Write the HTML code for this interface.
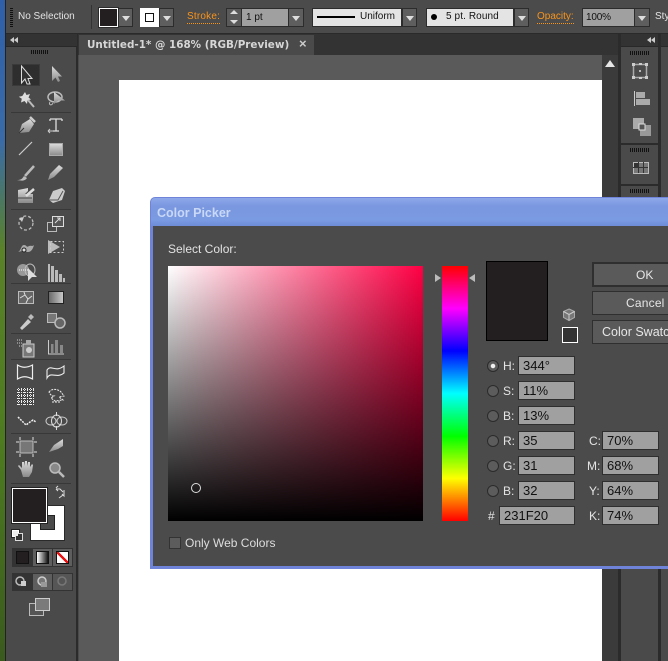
<!DOCTYPE html>
<html><head><meta charset="utf-8"><title>Color Picker</title>
<style>
html,body{margin:0;padding:0;background:#4a4a4a}
#p{position:relative;width:668px;height:661px;overflow:hidden;background:#4a4a4a;font-family:"Liberation Sans",sans-serif;font-size:12px;color:#e2e2e2}
#p div{position:absolute;box-sizing:border-box}
.t{white-space:nowrap;line-height:14px}
.dd{background:#5e5e5e;border:1px solid #2c2c2c}
.dd:after{content:"";position:absolute;left:3px;top:7px;border:4px solid transparent;border-top:5px solid #ddd;border-bottom:0}
.f{background:#a0a0a0;border:1px solid #2e2e2e;color:#111;line-height:17px;padding-left:4px;font-size:13px;height:19px}
.l{color:#e4e4e4;font-size:12px;line-height:19px;white-space:nowrap}
.r{width:12px;height:12px;border-radius:50%;background:#5c5c5c;border:1px solid #2b2b2b;left:487px}
.b{background:#5a5a5a;border:1px solid #2f2f2f;left:592px;width:90px;color:#e6e6e6;font-size:12px;line-height:22px}
.sep{height:1px;background:#383838;left:11px;width:60px}
.grip{height:4px;background:repeating-linear-gradient(90deg,#111 0 1px,transparent 1px 2px)}
</style></head><body><div id="p">
<!-- desktop edge -->
<div style="left:0;top:0;width:5px;height:661px;background:linear-gradient(180deg,#2f5fa8 0,#3a6ba8 140px,#5a8228 250px,#4d7a20 450px,#3a5a1e 661px)"></div>
<div style="left:5px;top:0;width:1px;height:661px;background:#222"></div>
<!-- top bar -->
<div style="left:6px;top:0;width:662px;height:34px;background:#4b4b4b;border-bottom:1px solid #2a2a2a"></div>
<div style="left:10px;top:8px;width:3px;height:19px;background:repeating-linear-gradient(180deg,#111 0 1px,transparent 1px 2px)"></div>
<div class="t" style="left:18px;top:10px;font-size:10px">No Selection</div>
<div style="left:91px;top:5px;width:1px;height:24px;background:#333"></div>
<div style="left:99px;top:8px;width:19px;height:19px;background:#231f20;border:1px solid #fff;outline:1px solid #2c2c2c"></div>
<div class="dd" style="left:118px;top:8px;width:15px;height:19px"></div>
<div style="left:140px;top:8px;width:19px;height:19px;background:#fff"><div style="left:5px;top:5px;width:9px;height:9px;border:1px solid #111"></div></div>
<div class="dd" style="left:159px;top:8px;width:15px;height:19px"></div>
<div class="t" style="left:187px;top:10px;font-size:10px;color:#f7941d;border-bottom:1px dotted #f7941d;line-height:13px;letter-spacing:.2px">Stroke:</div>
<div style="left:226px;top:8px;width:16px;height:19px;background:#5a5a5a;border:1px solid #2c2c2c"></div>
<div style="left:230px;top:10px;border:4px solid transparent;border-bottom:4px solid #ddd;border-top:0"></div>
<div style="left:230px;top:20px;border:4px solid transparent;border-top:4px solid #ddd;border-bottom:0"></div>
<div class="t" style="left:242px;top:8px;width:47px;height:19px;background:#a0a0a0;color:#111;padding:2px 4px;font-size:10px;border-top:1px solid #2c2c2c;border-bottom:1px solid #2c2c2c">1 pt</div>
<div class="dd" style="left:288px;top:8px;width:16px;height:19px"></div>
<div style="left:312px;top:8px;width:90px;height:19px;background:#e4e4e4;border:1px solid #2c2c2c"></div>
<div style="left:317px;top:16px;width:38px;height:2px;background:#000"></div>
<div class="t" style="left:360px;top:10px;color:#111;font-size:10px">Uniform</div>
<div class="dd" style="left:402px;top:8px;width:15px;height:19px"></div>
<div style="left:426px;top:8px;width:88px;height:19px;background:#e4e4e4;border:1px solid #2c2c2c"></div>
<div style="left:431px;top:14px;width:6px;height:6px;border-radius:50%;background:#000"></div>
<div class="t" style="left:446px;top:10px;color:#111;font-size:10px;letter-spacing:.1px">5 pt. Round</div>
<div class="dd" style="left:514px;top:8px;width:15px;height:19px"></div>
<div class="t" style="left:537px;top:10px;font-size:10px;color:#f7941d;border-bottom:1px dotted #f7941d;line-height:13px">Opacity:</div>
<div class="t" style="left:582px;top:8px;width:53px;height:19px;background:#a0a0a0;color:#111;padding:2px 3px;font-size:10px;letter-spacing:-.2px;border:1px solid #2c2c2c">100%</div>
<div class="dd" style="left:634px;top:8px;width:16px;height:19px"></div>
<div class="t" style="left:655px;top:10px;font-size:10px">Sty</div>
<!-- doc area -->
<div style="left:78px;top:34px;width:543px;height:21px;background:#333"></div>
<div style="left:79px;top:35px;width:235px;height:20px;background:#4a4a4a"></div>
<div class="t" style="left:87px;top:38px;font-size:10.400px;font-weight:bold;color:#d6d6d6;font-family:'DejaVu Sans',sans-serif">Untitled-1* @ 168% (RGB/Preview)</div>
<div class="t" style="left:299px;top:37px;font-size:13px;font-weight:bold;color:#ccc">×</div>
<div style="left:79px;top:55px;width:524px;height:606px;background:#5a5a5a"></div>
<div style="left:119px;top:80px;width:483px;height:581px;background:#fff"></div>
<div style="left:602px;top:55px;width:16px;height:606px;background:#3b3b3b"></div>
<div style="left:618px;top:34px;width:3px;height:627px;background:#2b2b2b"></div>
<div style="left:605px;top:60px;border:5px solid transparent;border-bottom:7px solid #e6e6e6;border-top:0"></div>
<!-- left panel -->
<div style="left:6px;top:34px;width:72px;height:627px;background:#4a4a4a;border-right:2px solid #2b2b2b"></div>
<div style="left:6px;top:34px;width:71px;height:13px;background:#333;border-bottom:1px solid #282828"></div>
<div style="left:10px;top:37px;font-size:0;border:3px solid transparent;border-right:4px solid #ccc;border-left:0"></div>
<div style="left:14px;top:37px;font-size:0;border:3px solid transparent;border-right:4px solid #ccc;border-left:0"></div>
<div class="grip" style="left:31px;top:50px;width:18px"></div>
<div style="left:12px;top:64px;width:28px;height:22px;background:#2e2e2e;border:1px solid #3a3a3a"></div>
<div class="sep" style="top:112px"></div><div class="sep" style="top:209px"></div><div class="sep" style="top:283px"></div><div class="sep" style="top:333px"></div><div class="sep" style="top:359px"></div><div class="sep" style="top:433px"></div><div class="sep" style="top:483px"></div>
<svg style="position:absolute;left:0;top:0" width="80" height="661" viewBox="0 0 80 661">
<defs><linearGradient id="g" x1="0" y1="0" x2="0" y2="1"><stop offset="0" stop-color="#ddd"/><stop offset="1" stop-color="#8a8a8a"/></linearGradient>
<linearGradient id="h" x1="0" y1="0" x2="1" y2="0"><stop offset="0" stop-color="#666"/><stop offset="1" stop-color="#ccc"/></linearGradient></defs>
<path d="M21.500 66V83L25 79L27 84H30L28 78.500H32Z" fill="#333" stroke="#ddd"/>
<path d="M52 66V81L55.500 77.500L58 82L60 81L58 76.500H62Z" fill="url(#g)"/>
<path d="M25 92l1.500 3 3.500-1-1.500 3.500 2.500 2-3.500.7L27 104l-2.500-3-3.500 1.500.8-3.700-3-2 3.500-.8Z" fill="#ddd"/><path d="M28 100l6 7" stroke="#bbb" stroke-width="2"/>
<ellipse cx="55" cy="97" rx="7" ry="5" fill="none" stroke="#bbb" stroke-width="1.500"/><path d="M54 92V104L58 100.500H65Z" fill="url(#g)"/><path d="M50 102c-2 3 2 4 3 1" fill="none" stroke="#bbb"/>
<path d="M19 133l3-9 8-5 4 5-5 8Z" fill="url(#g)"/><path d="M19 133l5-5" stroke="#333"/><path d="M30 117l5 5" stroke="#ccc" stroke-width="2.500"/>
<path d="M50 119H62M56 119V131M53 131H59M50 119v2M62 119v2" fill="none" stroke="#ddd" stroke-width="1.300"/><path d="M48 131H53M48 131l2-2M48 131l2 2" stroke="#ccc" fill="none"/>
<path d="M19 155L32 142" stroke="#ccc" stroke-width="1.200"/>
<rect x="49.500" y="143.500" width="13" height="12" fill="url(#g)" stroke="#aaa"/>
<path d="M17 180c4 0 5-1 7-4l3 2c-2 3-5 3-10 2Z" fill="#bbb"/><path d="M25 176L34 166" stroke="#bbb" stroke-width="2.500"/>
<path d="M48 180l2-6 9-9 4 3-9 9Z" fill="url(#g)"/>
<path d="M18 190l10-2v3l-3 3h8v9H18Z" fill="url(#g)"/><path d="M26 196l8-7" stroke="#ddd" stroke-width="2.500"/><path d="M18 198h14" stroke="#444"/>
<path d="M49 200l4-9 9-3 3 3-3 9-9 3Z" fill="#ccc"/><path d="M49 200h9l5-9" stroke="#555" fill="none"/>
<circle cx="26" cy="223" r="7" fill="none" stroke="#bbb" stroke-width="1.300" stroke-dasharray="3 2"/><path d="M19 218l3 4 2-5Z" fill="#ccc"/>
<rect x="47.500" y="222.500" width="9" height="9" fill="none" stroke="#bbb"/><rect x="52.500" y="216.500" width="11" height="10" fill="#555" stroke="#ddd"/><path d="M55 223l5-5M57 218h3v3" stroke="#ddd" fill="none"/>
<path d="M18 252c3-1 3-7 6-7s2 3 5 1c2-1 3 1 5-1-1 4-3 7-6 7s-4-3-6-1Z" fill="#aaa"/><circle cx="24" cy="250" r="2" fill="#ddd" stroke="#222"/>
<path d="M48 240l12 7-12 7Z" fill="#bbb"/><rect x="50.500" y="241.500" width="13" height="11" fill="none" stroke="#ccc" stroke-dasharray="2 2"/>
<ellipse cx="23" cy="270" rx="6" ry="6" fill="#999"/><ellipse cx="30" cy="270" rx="5" ry="6" fill="none" stroke="#bbb"/><path d="M28 268V281L32 277H37Z" fill="#ddd"/><path d="M19 270h9" stroke="#fff" stroke-dasharray="1 1"/>
<path d="M48 264h2v18h-2ZM51 266h3v16h-3ZM55 270h3v12h-3ZM59 274h3v8h-3ZM63 278h2v4h-2Z" fill="#bbb"/>
<rect x="18.500" y="291.500" width="15" height="12" fill="#666" stroke="#bbb"/><path d="M20 298l5-3 3 4 4-3M25 295l-1-3M28 299l-2 4" stroke="#ddd" fill="none"/>
<rect x="48.500" y="291.500" width="15" height="12" fill="url(#h)" stroke="#222"/>
<path d="M20 328l8-9 3 3-9 8Z" fill="#ccc"/><path d="M28 317l3-3 3 3-3 3Z" fill="#bbb"/>
<rect x="47.500" y="313.500" width="9" height="9" fill="#777" stroke="#bbb"/><circle cx="60" cy="323" r="5" fill="#666" stroke="#bbb" stroke-width="1.500"/>
<rect x="23" y="344" width="11" height="13" fill="#777" stroke="#ccc"/><circle cx="29" cy="350" r="3" fill="#ccc"/><rect x="26" y="340" width="5" height="4" fill="#aaa"/><path d="M17 340h5M17 343h5M19 346h3" stroke="#ccc" stroke-dasharray="1 1"/>
<path d="M48.500 340v14H64" stroke="#ccc" fill="none"/><rect x="51" y="344" width="2.500" height="9" fill="#888"/><rect x="55" y="340" width="3" height="13" fill="#888"/><rect x="60" y="345" width="3" height="8" fill="#888"/>
<path d="M17.500 365c5 3 9 3 15 0v14c-6-3-10-3-15 0Z" fill="none" stroke="#eee" stroke-width="1.200"/>
<path d="M47 370c4-6 8 3 17-4v7c-7 6-13-2-17 5Z" fill="none" stroke="#eee" stroke-width="1.100"/>
<rect x="17" y="388" width="17" height="17" fill="#444"/><path d="M17 389.500h18M17 392.500h18M17 395.500h18M17 398.500h18M17 401.500h18M17 404.500h18M18.500 388v18M21.500 388v18M24.500 388v18M27.500 388v18M30.500 388v18M33.500 388v18" stroke="#eee" stroke-dasharray="1 1"/>
<path d="M49 392c3-4 9-3 12 0l3 4-5 1 4 3-8 1-4-3 3-2c-3 0-4-2-5-4ZM52 402h8" fill="none" stroke="#eee" stroke-dasharray="2 1"/>
<path d="M18 417l5 5 3 3 4-3 3-2 3 2" fill="none" stroke="#eee" stroke-width="1.500" stroke-dasharray="2 1"/>
<ellipse cx="51" cy="421" rx="5" ry="4" fill="none" stroke="#ccc"/><ellipse cx="62" cy="421" rx="5" ry="4" fill="none" stroke="#ccc"/><ellipse cx="56.500" cy="421" rx="5" ry="6" fill="none" stroke="#ddd"/><path d="M56.500 412v4M56.500 426v4" stroke="#ddd"/>
<rect x="20" y="441" width="13" height="12" fill="#777" stroke="#bbb"/><path d="M16 442h3M34 442h3M16 452h3M34 452h3M20 437v3M33 437v3M20 454v3M33 454v3" stroke="#ddd"/>
<path d="M49 452l5-7 9-6v7l-5 3Z" fill="url(#g)"/>
<path d="M21 470l-3-4 1-1 3 3v-6h2v4l1-5h2v5l1-4h2v5l2-3 1 1-1 7-3 5h-6Z" fill="url(#g)"/>
<circle cx="55" cy="468" r="5" fill="#888" stroke="#bbb" stroke-width="1.500"/><path d="M59 472l5 5" stroke="#bbb" stroke-width="2.500"/>
<path d="M56 489h4l3 3M59 498l4-3M56 488l2-2M56 489l2 2M64 490v6l-2-2" stroke="#ddd" fill="none"/>
<rect x="11.500" y="529.500" width="8" height="8" fill="#fff" stroke="#222"/><rect x="15.500" y="533.500" width="7" height="7" fill="#333" stroke="#ddd"/>
<path d="M13 531h5v5h-5Z" fill="#eee"/>
<rect x="29.500" y="603.500" width="14" height="12" fill="#555" stroke="#bbb"/><rect x="35.500" y="598.500" width="14" height="12" fill="#7a7a7a" stroke="#ccc"/>
</svg>
<div style="left:30px;top:505px;width:35px;height:36px;background:#fff;border:1px solid #2a2a2a"><div style="left:9px;top:9px;width:15px;height:15px;background:#4a4a4a;border:1px solid #222"></div></div>
<div style="left:12px;top:488px;width:35px;height:35px;background:#231f20;border:1px solid #fff;outline:1px solid #222"></div>
<div style="left:12px;top:548px;width:61px;height:19px;background:#333"></div>
<div style="left:33px;top:549px;width:19px;height:17px;background:#5e5e5e"></div>
<div style="left:53px;top:549px;width:19px;height:17px;background:#5e5e5e"></div>
<div style="left:16px;top:551px;width:13px;height:13px;background:#231f20;border:1px solid #111"></div>
<div style="left:36px;top:551px;width:13px;height:13px;background:linear-gradient(90deg,#fff,#111);border:1px solid #111"></div>
<div style="left:56px;top:551px;width:13px;height:13px;background:linear-gradient(135deg,#fff 0 42%,#e11 42% 58%,#fff 58%);border:1px solid #111;transform:scaleX(-1)"></div>
<div style="left:12px;top:573px;width:61px;height:18px;background:#333"></div>
<div style="left:33px;top:574px;width:19px;height:16px;background:#5e5e5e"></div>
<div style="left:53px;top:574px;width:19px;height:16px;background:#565656"></div>
<svg style="position:absolute;left:12px;top:573px" width="61" height="18"><circle cx="8" cy="8" r="4" fill="none" stroke="#bbb" stroke-width="1.500"/><rect x="9" y="8" width="5" height="5" fill="#ccc"/><circle cx="30" cy="8" r="4" fill="#777" stroke="#ccc" stroke-width="1.500"/><rect x="29" y="9" width="6" height="5" fill="#999"/><circle cx="50" cy="8" r="4" fill="#555" stroke="#777" stroke-width="1.500"/></svg>
<!-- right panel -->
<div style="left:621px;top:34px;width:47px;height:13px;background:#333;border-bottom:1px solid #282828"></div>
<div style="left:647px;top:37px;border:3px solid transparent;border-right:4px solid #ccc;border-left:0"></div>
<div style="left:651px;top:37px;border:3px solid transparent;border-right:4px solid #ccc;border-left:0"></div>
<div style="left:621px;top:47px;width:37px;height:614px;background:#4a4a4a"></div>
<div style="left:658px;top:34px;width:3px;height:627px;background:#2b2b2b"></div>
<div style="left:621px;top:143px;width:37px;height:2px;background:#2b2b2b"></div>
<div style="left:621px;top:184px;width:37px;height:2px;background:#2b2b2b"></div>
<div class="grip" style="left:630px;top:51px;width:19px"></div>
<div class="grip" style="left:630px;top:148px;width:19px"></div>
<div class="grip" style="left:630px;top:189px;width:19px"></div>
<svg style="position:absolute;left:621px;top:47px" width="47" height="160">
<rect x="12.500" y="17.500" width="13" height="13" fill="none" stroke="#aaa" stroke-width="1.500"/><path d="M11 16h3v3h-3ZM24 16h3v3h-3ZM11 29h3v3h-3ZM24 29h3v3h-3ZM18 16h3v2h-3ZM18 30h3v2h-3Z" fill="#ccc"/><circle cx="19" cy="24" r="1" fill="#ddd"/>
<path d="M13.500 44v15" stroke="#ccc"/><rect x="15" y="45" width="9" height="6" fill="#aaa"/><rect x="15" y="52" width="14" height="6" fill="#aaa"/>
<rect x="12" y="71" width="11" height="11" fill="#aaa"/><rect x="19" y="78" width="11" height="11" fill="#999"/><rect x="18" y="77" width="6" height="6" fill="#555" stroke="#ddd"/>
<rect x="12.500" y="115.500" width="15" height="11" fill="#777" stroke="#bbb"/><path d="M17.500 115v11M22.500 115v11M12 120.500h15" stroke="#333"/><rect x="13" y="116" width="4" height="4" fill="#333"/>
</svg>
<!-- dialog -->
<div style="left:150px;top:197px;width:518px;height:372px;background:#6f83d8;border-radius:5px 0 0 0"></div>
<div style="left:151px;top:198px;width:517px;height:28px;background:linear-gradient(180deg,#8ea8ea 0,#7a97df 8px,#7a9ae2 22px,#6e8cd8 28px);border-radius:4px 0 0 0"></div>
<div class="t" style="left:157px;top:206px;font-size:12.500px;font-weight:bold;color:#c9d8f6">Color Picker</div>
<div style="left:153px;top:226px;width:515px;height:340px;background:#4b4b4b"></div>
<div class="t" style="left:168px;top:242px;font-size:12px">Select Color:</div>
<div style="left:168px;top:266px;width:255px;height:255px;background:linear-gradient(180deg,rgba(0,0,0,0),#000),linear-gradient(90deg,#fff,#ff0044)"></div>
<div style="left:191px;top:483px;width:10px;height:10px;border-radius:50%;border:1px solid #ddd"></div>
<div style="left:442px;top:266px;width:26px;height:255px;background:linear-gradient(180deg,#f00 0,#f0f 16.700%,#00f 33.300%,#0ff 50%,#0f0 66.700%,#ff0 83.300%,#f00 100%)"></div>
<div style="left:435px;top:274px;border:4px solid transparent;border-left:6px solid #bbb;border-right:0"></div>
<div style="left:469px;top:274px;border:4px solid transparent;border-right:6px solid #bbb;border-left:0"></div>
<div style="left:486px;top:261px;width:62px;height:80px;background:#231f20;border:1px solid #000"></div>
<svg style="position:absolute;left:562px;top:308px" width="14" height="14"><path d="M7 1l5.500 2.500v6L7 12.500 1.500 9.500v-6Z" fill="#777" stroke="#aaa"/><path d="M1.500 3.500L7 6.500l5.500-3M7 6.500v6" stroke="#ccc" fill="none"/></svg>
<div style="left:562px;top:327px;width:16px;height:16px;background:#333;border:1px solid #fff"></div>
<div class="b" style="top:262px;height:25px;border:2px solid #2f2f2f;padding-left:42px">OK</div>
<div class="b" style="top:291px;height:24px;padding-left:33px;letter-spacing:.2px">Cancel</div>
<div class="b" style="top:320px;height:24px;padding-left:9px;white-space:nowrap;font-size:12.500px">Color Swatches</div>
<div class="r" style="top:360px;background:radial-gradient(circle,#eee 0 2px,#5c5c5c 2.500px)"></div><div class="r" style="top:385px"></div><div class="r" style="top:410px"></div><div class="r" style="top:435px"></div><div class="r" style="top:460px"></div><div class="r" style="top:485px"></div>
<div class="l" style="left:503px;top:357px">H:</div><div class="l" style="left:503px;top:382px">S:</div><div class="l" style="left:503px;top:407px">B:</div><div class="l" style="left:503px;top:432px">R:</div><div class="l" style="left:503px;top:457px">G:</div><div class="l" style="left:503px;top:482px">B:</div><div class="l" style="left:488px;top:507px">#</div>
<div class="f" style="left:518px;top:356px;width:57px">344°</div>
<div class="f" style="left:518px;top:381px;width:57px">11%</div>
<div class="f" style="left:518px;top:406px;width:57px">13%</div>
<div class="f" style="left:518px;top:431px;width:57px">35</div>
<div class="f" style="left:518px;top:456px;width:57px">31</div>
<div class="f" style="left:518px;top:481px;width:57px">32</div>
<div class="f" style="left:499px;top:506px;width:76px">231F20</div>
<div class="l" style="left:589px;top:432px">C:</div><div class="l" style="left:587px;top:457px">M:</div><div class="l" style="left:589px;top:482px">Y:</div><div class="l" style="left:589px;top:507px">K:</div>
<div class="f" style="left:602px;top:431px;width:57px">70%</div>
<div class="f" style="left:602px;top:456px;width:57px">68%</div>
<div class="f" style="left:602px;top:481px;width:57px">64%</div>
<div class="f" style="left:602px;top:506px;width:57px">74%</div>
<div style="left:169px;top:537px;width:12px;height:12px;background:#5c5c5c;border:1px solid #333"></div>
<div class="t" style="left:185px;top:536px;font-size:12px;color:#ddd">Only Web Colors</div>
</div></body></html>
